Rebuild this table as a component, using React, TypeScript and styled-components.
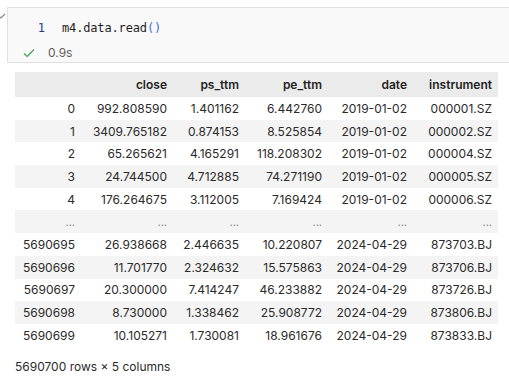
import React from "react";
import styled, { createGlobalStyle } from "styled-components";

const GlobalStyle = createGlobalStyle`
  html, body {
    margin: 0;
    padding: 0;
    background: #ffffff;
  }
  body {
    font-family: Inter, "Noto Sans", sans-serif;
    color: #1f1f1f;
    overflow: hidden;
  }
`;

const Page = styled.div`
  width: 509px;
  height: 382px;
  padding-top: 7px;
  box-sizing: border-box;
  position: relative;
`;

const Chevron = styled.svg`
  position: absolute;
  left: -4px;
  top: 12px;
`;

const CodeCell = styled.div`
  margin-left: 7px;
  height: 56px;
  box-sizing: border-box;
  border: 1px solid #e1e1e1;
  border-right: none;
  background: #f9f9f9;
  display: flex;
  flex-direction: column;
`;

const CodeLine = styled.div`
  display: flex;
  align-items: center;
  height: 22px;
  margin-top: 9px;
  font-family: "DejaVu Sans Mono", "Liberation Mono", monospace;
  font-size: 12px;
`;

const LineNo = styled.span`
  width: 54px;
  text-align: right;
  color: #1d3a8f;
  padding-right: 17px;
  box-sizing: border-box;
`;

const Code = styled.span`
  color: #1f1f1f;
  letter-spacing: -0.15px;
`;

const Paren = styled.span`
  color: #3a6ff0;
`;

const Status = styled.div`
  display: flex;
  align-items: center;
  gap: 13px;
  margin-top: 6px;
  padding-left: 15px;
  font-size: 12px;
  color: #5f5f5f;
`;

const Output = styled.div`
  padding: 9px 0 0 15px;
`;

const Table = styled.table`
  border-collapse: collapse;
  table-layout: fixed;
  width: 483px;
  font-size: 12px;
  color: #2a2a2a;

  th, td {
    text-align: right;
    padding: 0 6px 0 0;
    white-space: nowrap;
  }
  thead tr {
    background: #ebebeb;
    height: 25px;
  }
  th {
    font-weight: 600;
    color: #1f1f1f;
  }
  tbody tr {
    height: 22.7px;
  }
  tbody tr:nth-child(even) {
    background: #f4f4f4;
  }
`;

const Ellipsis = styled.td`
  color: #8a8a8a;
  font-size: 11px;
`;

const Footer = styled.div`
  margin-top: 12px;
  padding-left: 15px;
  font-size: 12px;
  color: #2a2a2a;
`;

const widths = [66, 92, 72, 83, 85, 85];
const headers = ["", "close", "ps_ttm", "pe_ttm", "date", "instrument"];

const rows: (string[] | null)[] = [
  ["0", "992.808590", "1.401162", "6.442760", "2019-01-02", "000001.SZ"],
  ["1", "3409.765182", "0.874153", "8.525854", "2019-01-02", "000002.SZ"],
  ["2", "65.265621", "4.165291", "118.208302", "2019-01-02", "000004.SZ"],
  ["3", "24.744500", "4.712885", "74.271190", "2019-01-02", "000005.SZ"],
  ["4", "176.264675", "3.112005", "7.169424", "2019-01-02", "000006.SZ"],
  null,
  ["5690695", "26.938668", "2.446635", "10.220807", "2024-04-29", "873703.BJ"],
  ["5690696", "11.701770", "2.324632", "15.575863", "2024-04-29", "873706.BJ"],
  ["5690697", "20.300000", "7.414247", "46.233882", "2024-04-29", "873726.BJ"],
  ["5690698", "8.730000", "1.338462", "25.908772", "2024-04-29", "873806.BJ"],
  ["5690699", "10.105271", "1.730081", "18.961676", "2024-04-29", "873833.BJ"],
];

export default function App() {
  return (
    <>
      <GlobalStyle />
      <Page>
        <Chevron width="10" height="8" viewBox="0 0 10 8">
          <path d="M1 2 L5 6 L9 2" fill="none" stroke="#8a8a8a" strokeWidth="1.2" />
        </Chevron>
        <CodeCell>
          <CodeLine>
            <LineNo>1</LineNo>
            <Code>
              m4.data.read<Paren>()</Paren>
            </Code>
          </CodeLine>
          <Status>
            <svg width="12" height="10" viewBox="0 0 12 10">
              <path d="M1 5.5 L4.2 8.5 L11 1.5" fill="none" stroke="#3c9a4a" strokeWidth="1.1" />
            </svg>
            <span>0.9s</span>
          </Status>
        </CodeCell>
        <Output>
          <Table>
            <colgroup>
              {widths.map((w, i) => (
                <col key={i} style={{ width: w }} />
              ))}
            </colgroup>
            <thead>
              <tr>
                {headers.map((h, i) => (
                  <th key={i}>{h}</th>
                ))}
              </tr>
            </thead>
            <tbody>
              {rows.map((r, i) =>
                r ? (
                  <tr key={i}>
                    {r.map((c, j) => (
                      <td key={j}>{c}</td>
                    ))}
                  </tr>
                ) : (
                  <tr key={i}>
                    {headers.map((_, j) => (
                      <Ellipsis key={j}>...</Ellipsis>
                    ))}
                  </tr>
                )
              )}
            </tbody>
          </Table>
        </Output>
        <Footer>5690700 rows × 5 columns</Footer>
      </Page>
    </>
  );
}
